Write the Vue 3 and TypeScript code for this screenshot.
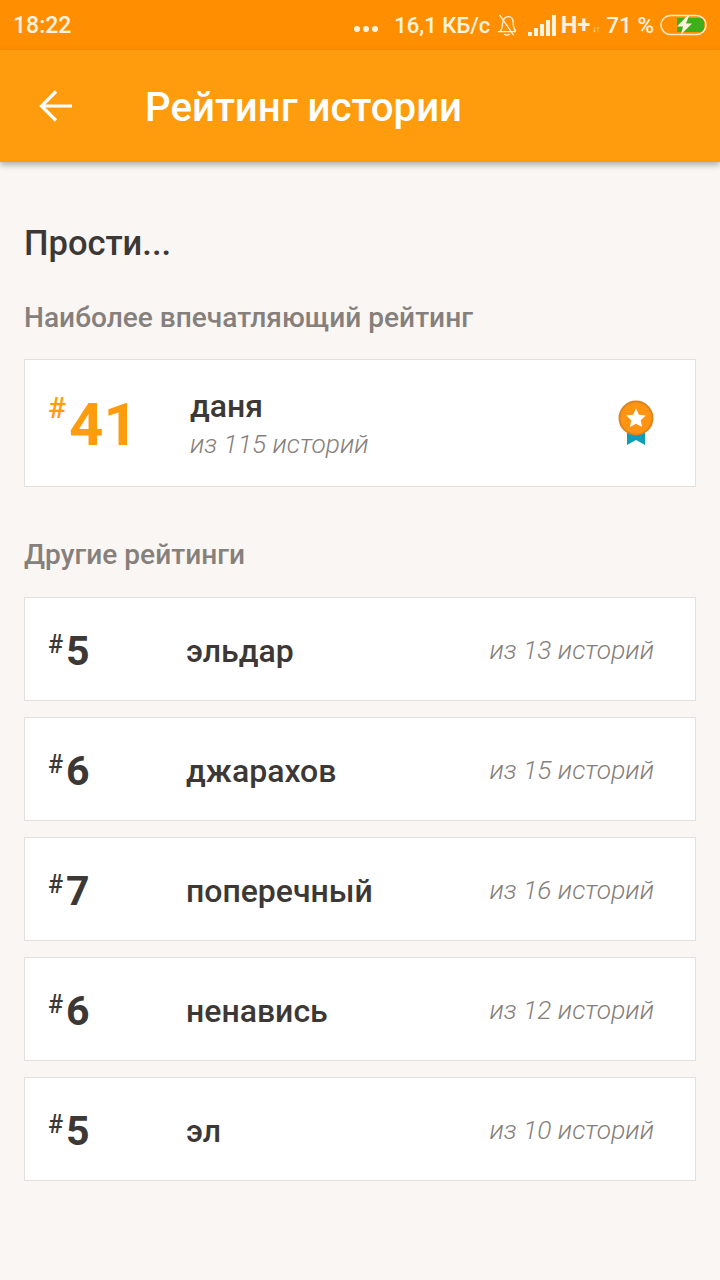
<template>
  <div class="screen">
    <div class="status">
      <span class="time">18:22</span>
      <div class="status-right">
        <span class="dots"><i></i><i></i><i></i></span>
        <span class="speed">16,1 КБ/с</span>
        <svg class="bell" width="22" height="26" viewBox="0 0 25 26" fill="none" stroke="#fff3e0" stroke-width="1.500">
          <path d="M2 20.500h20M4.500 20.500c2.500-2.500 2.500-5 3-9.500C8 6.500 10 3.500 14 3.500c4 0 5.500 3.500 5.500 7 0 4.500 1 7.500 3 10" />
          <path d="M4 1.500 20 24.500M9.500 23c1.500 2 4.500 2 6 0" />
        </svg>
        <span class="bars"><i v-for="h in barHeights" :key="h" :style="{ height: h + 'px' }"></i></span>
        <span class="net">H+</span>
        <span class="arrows">↓↑</span>
        <span class="pct">71 %</span>
        <svg class="battery" width="48" height="22" viewBox="0 0 48 22">
          <rect x="1" y="1.500" width="45" height="19" rx="9.500" fill="none" stroke="#ffe9c8" stroke-width="1.600" />
          <path d="M17 4h24a6 6 0 0 1 3 7 6 6 0 0 1-3 7H17z" fill="#3fae1c" />
          <path d="M27 2 17 12.500h6l-2 8 11-11h-6l3-7.500z" fill="#fff3dc" />
        </svg>
      </div>
    </div>

    <header class="toolbar">
      <svg class="back" width="36" height="36" viewBox="0 0 36 36" fill="none" stroke="#fff" stroke-width="3.200">
        <path d="M34 18H4M18 3.500 3.500 18 18 32.500" />
      </svg>
      <h1>Рейтинг истории</h1>
    </header>

    <main class="content">
      <h2>Прости...</h2>
      <h3>Наиболее впечатляющий рейтинг</h3>

      <div class="card top">
        <div class="rank big"><sup>#</sup><b>41</b></div>
        <div class="top-text">
          <div class="name">даня</div>
          <div class="of">из 115 историй</div>
        </div>
        <svg class="medal" width="38" height="46" viewBox="0 0 38 46">
          <path d="M10 28h18v17l-9-5-9 5z" fill="#0f9fb5" />
          <circle cx="19" cy="18" r="16.500" fill="#ff9412" stroke="#dd8420" stroke-width="2" />
          <path d="M19 8.500l2.900 6.300 6.900.8-5.100 4.700 1.400 6.800-6.100-3.400-6.100 3.400 1.400-6.800-5.100-4.700 6.900-.8z" fill="#fff" />
        </svg>
      </div>

      <h3 class="other">Другие рейтинги</h3>

      <div class="list">
        <div class="card row" v-for="item in ratings" :key="item.name">
          <div class="rank"><sup>#</sup><b>{{ item.rank }}</b></div>
          <div class="name">{{ item.name }}</div>
          <div class="of">из {{ item.total }} историй</div>
        </div>
      </div>
    </main>
  </div>
</template>

<script setup lang="ts">
const barHeights = [4, 8, 12, 16, 21];

const ratings = [
  { rank: 5, name: 'эльдар', total: 13 },
  { rank: 6, name: 'джарахов', total: 15 },
  { rank: 7, name: 'поперечный', total: 16 },
  { rank: 6, name: 'ненавись', total: 12 },
  { rank: 5, name: 'эл', total: 10 },
];
</script>

<style>
html, body {
  margin: 0;
  background: #faf6f3;
}
</style>

<style scoped>
.screen {
  width: 720px;
  height: 1280px;
  overflow: hidden;
  background: #faf6f3;
  font-family: Roboto, "Noto Sans", sans-serif;
}

.status {
  height: 50px;
  box-sizing: border-box;
  padding: 0 12px 0 13px;
  display: flex;
  align-items: center;
  justify-content: space-between;
  background: #ff8f00;
  color: #fff3e0;
  font-size: 23px;
  font-weight: 500;
}

.status-right {
  display: flex;
  align-items: center;
}

.dots {
  display: flex;
  gap: 3px;
  margin-top: 8px;
  margin-right: 16px;
}

.dots i {
  width: 6px;
  height: 6px;
  border-radius: 50%;
  background: #fff3e0;
}

.speed {
  font-size: 22px;
  margin-right: 6px;
}

.bell {
  margin-right: 10px;
}

.bars {
  display: flex;
  align-items: flex-end;
  gap: 2.500px;
  height: 22px;
  margin-right: 5px;
}

.bars i {
  width: 3.500px;
  background: #fff3e0;
}

.net {
  font-size: 23.500px;
  font-weight: 700;
}

.arrows {
  font-size: 9px;
  letter-spacing: -1px;
  margin: 8px 7px 0 2px;
}

.pct {
  font-size: 22.500px;
  margin-right: 6px;
}

.toolbar {
  height: 112px;
  display: flex;
  align-items: center;
  padding-left: 38px;
  background: #ff9c0e;
  box-shadow: 0 3px 6px rgba(0, 0, 0, 0.3);
  position: relative;
}

.back {
  margin-right: 71px;
}

.toolbar h1 {
  margin: 2px 0 0;
  color: #fff;
  font-size: 40.200px;
  font-weight: 500;
}

.content {
  padding: 61px 24px 0;
}

h2 {
  margin: 0;
  height: 40px;
  line-height: 40px;
  color: #3c3836;
  font-size: 34.500px;
  font-weight: 500;
}

h3 {
  margin: 39px 0 0;
  height: 32px;
  line-height: 32px;
  color: #85807c;
  font-size: 28.100px;
  font-weight: 500;
}

h3.other {
  margin-top: 52px;
}

.card {
  box-sizing: border-box;
  display: flex;
  align-items: center;
  background: #fff;
  border: 1px solid #e6e0dc;
}

.top {
  height: 128px;
  margin-top: 25px;
  padding: 0 40px 0 23px;
}

.rank {
  display: flex;
  align-items: flex-start;
  color: #3c3836;
  font-weight: 500;
}

.rank sup {
  font-size: 25px;
  line-height: 28px;
  font-weight: 500;
  margin-top: 8px;
}

.rank b {
  font-size: 41px;
  line-height: 48px;
  font-weight: 700;
  margin-top: 4px;
  margin-left: 3px;
}

.rank.big {
  width: 142px;
  color: #ff9c0e;
}

.rank.big sup {
  font-size: 30px;
  line-height: 34px;
  font-weight: 500;
  margin-top: 4px;
}

.rank.big b {
  font-size: 60px;
  line-height: 70px;
  font-weight: 700;
  margin-top: 3px;
  margin-left: 3px;
}

.top-text {
  flex: 1;
}

.name {
  color: #3c3836;
  font-size: 32px;
  font-weight: 500;
  margin-top: 3px;
}

.of {
  color: #85807c;
  font-size: 26.300px;
  font-style: italic;
  font-weight: 300;
  margin-top: 2px;
}

.top-text .name {
  line-height: 38px;
  margin-top: 3px;
}

.top-text .of {
  line-height: 36px;
  margin-top: 1px;
}

.list {
  display: flex;
  flex-direction: column;
  gap: 16px;
  margin-top: 26px;
}

.row {
  height: 104px;
  padding: 0 41px 0 23px;
}

.row .rank {
  width: 138px;
}

.row .name {
  flex: 1;
}
</style>
